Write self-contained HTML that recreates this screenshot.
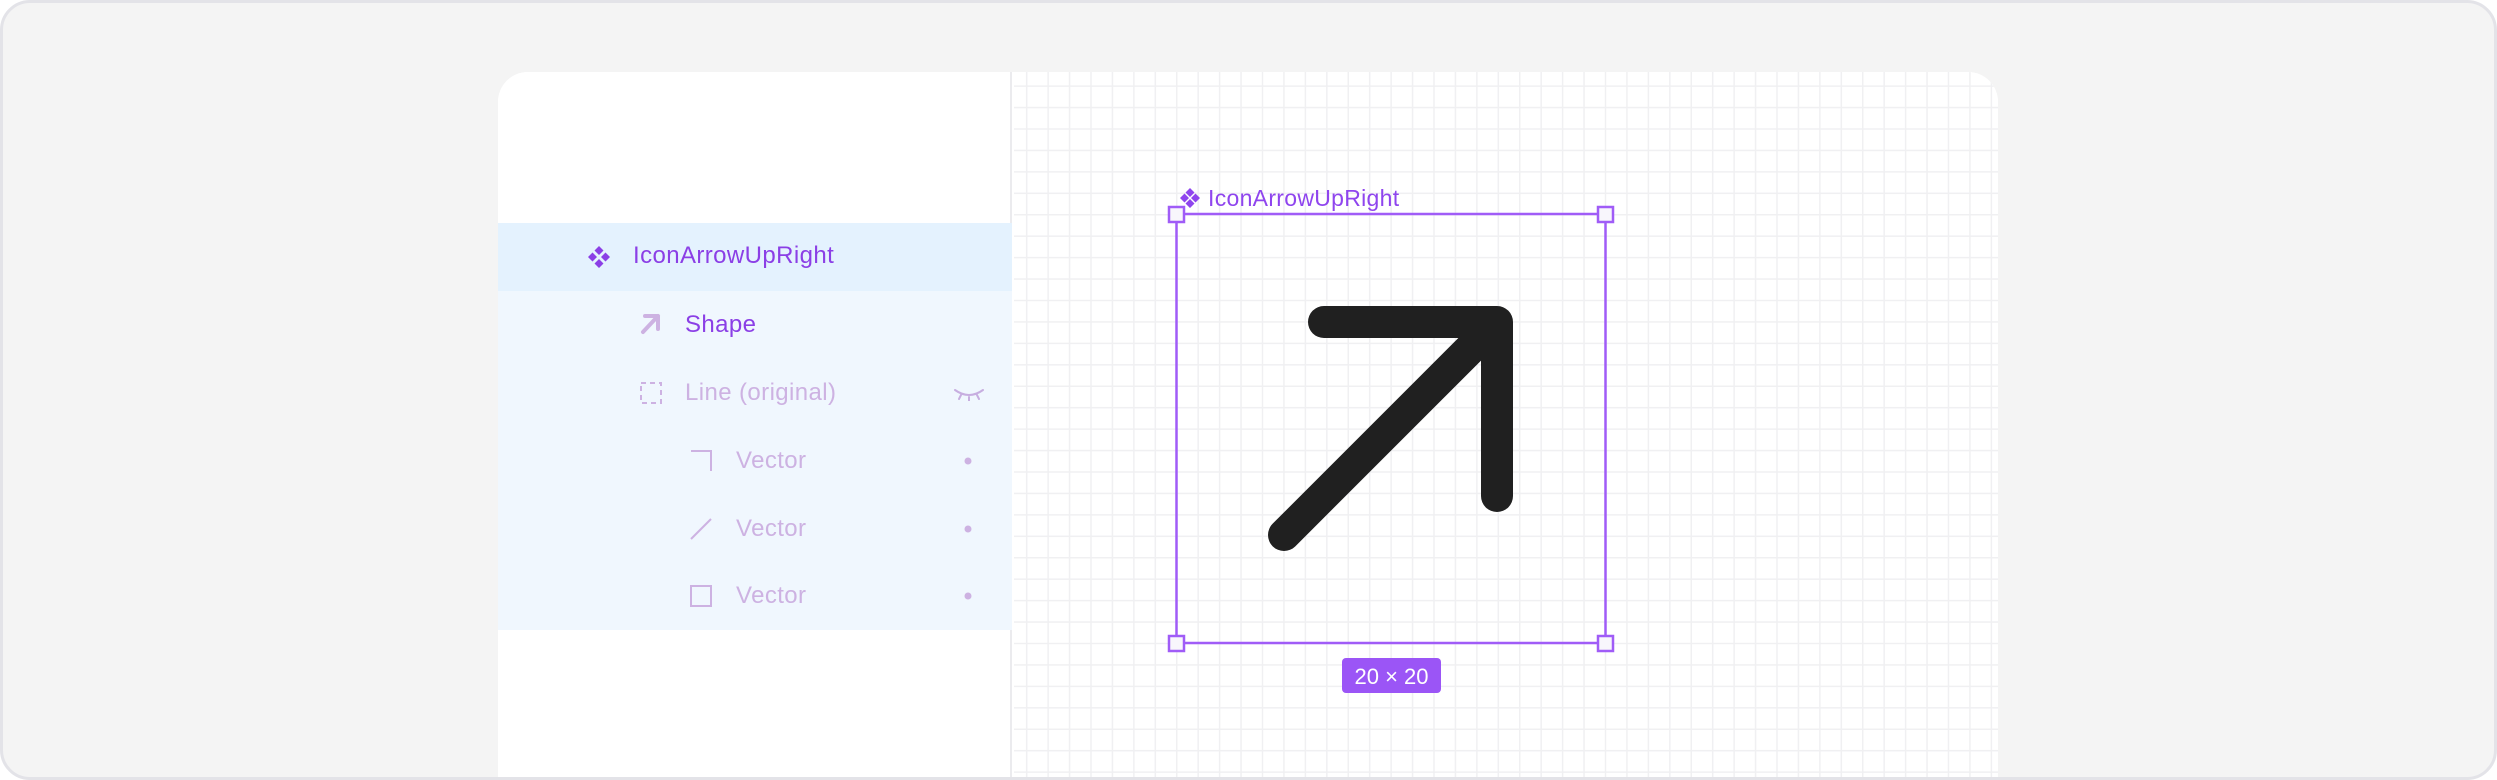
<!DOCTYPE html>
<html><head><meta charset="utf-8"><style>
*{margin:0;padding:0;box-sizing:border-box}
html,body{width:2497px;height:780px;overflow:hidden;background:#fff;font-family:"Liberation Sans",sans-serif}
.outer{position:absolute;left:0;top:0;width:2497px;height:780px;background:#f4f4f4;border:3px solid #e3e3e8;border-radius:30px;overflow:hidden}
.card{position:absolute;left:495px;top:69px;width:1500px;height:740px;background:#fff;border-radius:30px 30px 0 0;overflow:hidden}
.panel{position:absolute;left:0;top:0;width:514px;height:740px;background:#fff;border-right:2px solid #ebebee}
.sel{position:absolute;left:0;top:151px;width:514px;height:68px;background:#e4f2fe}
.rows{position:absolute;left:0;top:219px;width:514px;height:339px;background:#f0f7fe}
.t{position:absolute;font-size:24px;line-height:24px;white-space:nowrap;letter-spacing:0.4px}
.canvas{position:absolute;left:516px;top:0;width:984px;height:740px;background-color:#fff;
background-image:linear-gradient(to right,#f0f0f2 1.5px,transparent 1.5px),linear-gradient(to bottom,#f0f0f2 1.5px,transparent 1.5px);
background-size:21.45px 21.45px;background-position:162px 142px}
svg{position:absolute}
</style></head><body>
<div class="outer">
<div class="card">
 <div class="panel">
  <div class="sel"></div>
  <div class="rows"></div>
  <svg style="left:89px;top:173px" width="24" height="24" viewBox="0 0 24 24" fill="#8b3fe6">
   <path d="M12 1l4.5 4.5L12 10 7.5 5.5z M12 14l4.5 4.5L12 23l-4.5-4.5z M5.5 7.5L10 12l-4.5 4.5L1 12z M18.5 7.5L23 12l-4.5 4.5L14 12z"/></svg>
  <div class="t" style="left:135px;top:172px;color:#8b3fe6">IconArrowUpRight</div>
  <svg style="left:142px;top:241px" width="22" height="23" viewBox="0 0 22 23" fill="none" stroke="#cdb2e2" stroke-width="4" stroke-linecap="round" stroke-linejoin="round">
   <path d="M5 3h13v13 M18 3L3 19"/></svg>
  <div class="t" style="left:187px;top:241px;color:#8b3fe6">Shape</div>
  <svg style="left:142px;top:310px" width="22" height="22" fill="none" stroke="#cdb2e2" stroke-width="2" stroke-dasharray="5 4">
   <rect x="1" y="1" width="20" height="20"/></svg>
  <div class="t" style="left:187px;top:309px;color:#cdb2e2">Line (original)</div>
  <svg style="left:455px;top:315px" width="32" height="14" fill="none" stroke="#c7aee0" stroke-width="2" stroke-linecap="round">
   <path d="M2 3Q16 13 30 3 M8 8l-2 4 M16 10v4 M24 8l2 4"/></svg>
  <svg style="left:192px;top:378px" width="22" height="22" fill="none" stroke="#cdb2e2" stroke-width="2">
   <path d="M1 1h20v20"/></svg>
  <div class="t" style="left:238px;top:377px;color:#cdb2e2">Vector</div>
  <svg style="left:192px;top:446px" width="22" height="22" fill="none" stroke="#cdb2e2" stroke-width="2">
   <path d="M1 21L21 1"/></svg>
  <div class="t" style="left:238px;top:445px;color:#cdb2e2">Vector</div>
  <svg style="left:192px;top:513px" width="22" height="22" fill="none" stroke="#cdb2e2" stroke-width="2">
   <rect x="1" y="1" width="20" height="20"/></svg>
  <div class="t" style="left:238px;top:512px;color:#cdb2e2">Vector</div>
  <svg style="left:466px;top:384px" width="8" height="160" fill="#cdb2e2">
   <circle cx="4" cy="5" r="3.5"/><circle cx="4" cy="73" r="3.5"/><circle cx="4" cy="140" r="3.5"/></svg>
 </div>
 <div class="canvas"></div>
</div>
</div>
<svg style="left:0;top:0" width="2497" height="780">
 <g fill="#8f45ee">
  <path d="M1190 188l4.5 4.5-4.5 4.5-4.5-4.5z M1190 199l4.5 4.5-4.5 4.5-4.5-4.5z M1184.5 193.5l4.5 4.5-4.5 4.5-4.5-4.5z M1195.5 193.5l4.5 4.5-4.5 4.5-4.5-4.5z"/>
 </g>
 <text x="1208" y="206" font-family="Liberation Sans, sans-serif" font-size="23" letter-spacing="0.3" fill="#8f45ee">IconArrowUpRight</text>
 <path d="M1324 322H1497V496 M1497 322L1284 535" fill="none" stroke="#202020" stroke-width="32" stroke-linecap="round" stroke-linejoin="round"/>
 <rect x="1176.5" y="214" width="429" height="429" fill="none" stroke="#a05cf7" stroke-width="2.5"/>
 <g fill="#f8f6fc" stroke="#a05cf7" stroke-width="2.5">
  <rect x="1169" y="207" width="15" height="15"/><rect x="1598" y="207" width="15" height="15"/>
  <rect x="1169" y="636" width="15" height="15"/><rect x="1598" y="636" width="15" height="15"/>
 </g>
 <rect x="1342" y="658" width="99" height="35" rx="4" fill="#9b55f6"/>
 <text x="1391.5" y="684" text-anchor="middle" font-family="Liberation Sans, sans-serif" font-size="22" fill="#fff">20 × 20</text>
</svg>
</body></html>
